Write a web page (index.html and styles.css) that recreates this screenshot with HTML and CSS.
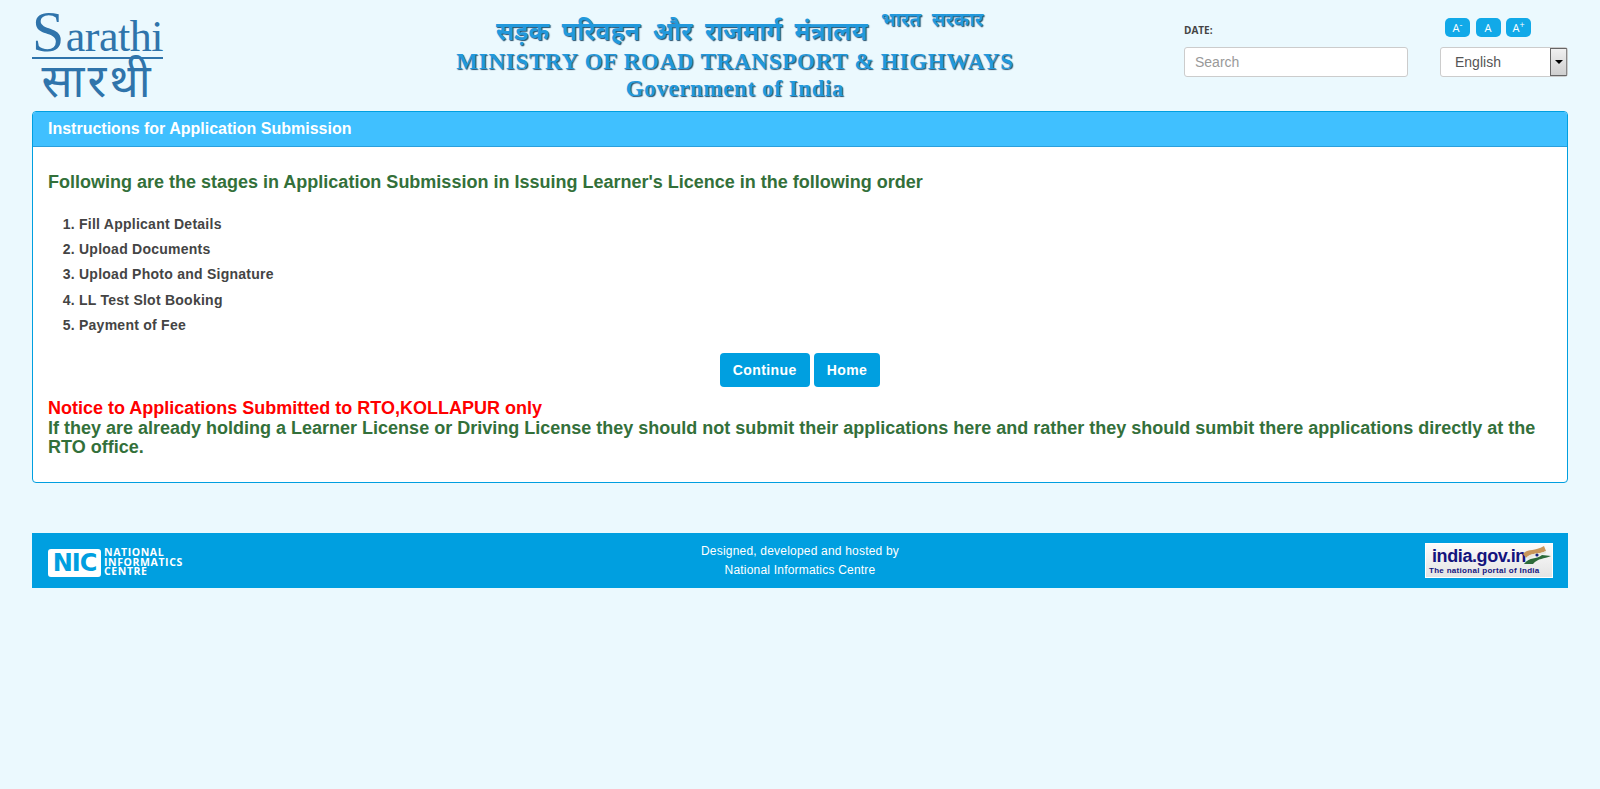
FILE: index.html
```html
<!DOCTYPE html>
<html lang="en">
<head>
  <meta charset="UTF-8" />
  <title>Sarathi - Instructions for Application Submission</title>
  <meta name="viewport" content="width=device-width, initial-scale=1.0" />
  <link rel="stylesheet" href="styles.css">
</head>
<body>

  <header class="topo">
    <div class="logo-sarathi">
      <div class="logo-en"><span class="logo-s">S</span>arathi</div>
      <div class="logo-hi" lang="hi">सारथी</div>
    </div>

    <div class="ministerio">
      <div class="min-hi" lang="hi">सड़क परिवहन और राजमार्ग मंत्रालय <sup>भारत सरकार</sup></div>
      <div class="min-en">MINISTRY OF ROAD TRANSPORT &amp; HIGHWAYS</div>
      <div class="min-gov">Government of India</div>
    </div>

    <div class="busca">
      <div class="data">DATE:</div>
      <input type="text" class="campo" placeholder="Search" />
    </div>

    <div class="opcoes">
      <div class="fontes">
        <a href="#" class="fonte">A<sup>-</sup></a>
        <a href="#" class="fonte">A</a>
        <a href="#" class="fonte">A<sup>+</sup></a>
      </div>
      <div class="idioma">
        <span>English</span>
        <span class="seta"><i></i></span>
      </div>
    </div>
  </header>

  <main class="painel">
    <div class="painel-titulo">Instructions for Application Submission</div>
    <div class="painel-corpo">
      <h3>Following are the stages in Application Submission in Issuing Learner's Licence in the following order</h3>

      <ol class="etapas">
        <li>Fill Applicant Details</li>
        <li>Upload Documents</li>
        <li>Upload Photo and Signature</li>
        <li>LL Test Slot Booking</li>
        <li>Payment of Fee</li>
      </ol>

      <div class="botoes">
        <button>Continue</button>
        <button>Home</button>
      </div>

      <div class="aviso">
        <span class="vermelho">Notice to Applications Submitted to RTO,KOLLAPUR only</span><br />
        If they are already holding a Learner License or Driving License they should not submit their applications here and rather they should sumbit there applications directly at the RTO office.
      </div>
    </div>
  </main>

  <footer class="rodape">
    <div class="nic">
      <span class="nic-caixa">NIC</span>
      <span class="nic-nome">NATIONAL<br />INFORMATICS<br />CENTRE</span>
    </div>
    <div class="creditos">
      Designed, developed and hosted by<br />
      National Informatics Centre
    </div>
    <div class="india-gov">
      <span class="india-url">india.gov.in</span>
      <svg class="india-flag" viewBox="0 0 30 20" width="30" height="20">
        <path d="M1 9 C6 3 12 7 22 1 L24 6 C16 10 9 7 4 13 Z" fill="#c9965a" />
        <path d="M4 13 C9 7 16 10 24 6 L24 8 C18 11 12 9 8 14 Z" fill="#e8e8e0" />
        <path d="M2 19 C8 11 14 15 20 10 L29 11 C22 14 16 13 11 19 Z" fill="#2d6b3a" />
        <circle cx="15" cy="10" r="1.6" fill="#1a237e" />
      </svg>
      <span class="india-sub">The national portal of India</span>
    </div>
  </footer>

</body>
</html>
```

FILE: styles.css
```css
body {
  margin: 0;
  padding: 0 32px;
  background-color: #ebf9fe;
  font-family: "Liberation Sans", Arial, sans-serif;
  color: #444;
}

/* topo */
.topo {
  display: flex;
  height: 111px;
}

.logo-sarathi {
  width: 131px;
  padding-top: 12px;
  color: #2f74ab;
  font-family: "Liberation Serif", serif;
  text-align: right;
}

.logo-en {
  height: 45px;
  font-size: 44px;
  line-height: 46px;
  letter-spacing: -0.5px;
  white-space: nowrap;
}

.logo-s {
  font-size: 58px;
  line-height: 40px;
  margin-right: 2px;
}

.logo-hi {
  font-size: 46px;
  line-height: 40px;
  letter-spacing: 3px;
  text-align: center;
  white-space: nowrap;
  border-top: 2px solid #2f74ab;
  font-family: "Noto Sans", "DejaVu Sans", sans-serif;
}

.ministerio {
  width: 600px;
  margin-left: 272px;
  text-align: center;
  font-family: "Liberation Serif", serif;
  font-weight: bold;
  color: #2299dc;
  text-shadow: 1px 1px 1px #24506f;
}

.min-hi {
  font-family: "Noto Sans", "DejaVu Sans", sans-serif;
  font-size: 25px;
  line-height: 36px;
  padding-top: 12px;
  padding-left: 9px;
  word-spacing: 6px;
  white-space: nowrap;
}

.min-hi sup {
  font-size: 18.7px;
  line-height: 0;
  margin-left: 1px;
  vertical-align: 14px;
}

.min-en {
  font-size: 23px;
  line-height: 28px;
  letter-spacing: 0.75px;
  white-space: nowrap;
}

.min-gov {
  font-size: 23px;
  line-height: 26px;
  letter-spacing: 0.6px;
}

.busca {
  width: 224px;
  margin-left: 149px;
  padding-top: 23px;
}

.data {
  font-family: "Open Sans", sans-serif;
  font-size: 10px;
  font-weight: bold;
  line-height: 14px;
  margin-bottom: 10px;
  color: #444;
}

.campo {
  display: block;
  width: 100%;
  height: 30px;
  box-sizing: border-box;
  padding: 0 10px;
  border: 1px solid #ccc;
  border-radius: 3px;
  font-family: inherit;
  font-size: 14px;
  color: #555;
  background: #fff;
}

.campo::placeholder {
  color: #999;
}

.opcoes {
  width: 128px;
  margin-left: 32px;
  padding-top: 18px;
}

.fontes {
  display: flex;
  gap: 5.5px;
  padding-left: 5px;
  margin-bottom: 10px;
}

.fonte {
  display: block;
  width: 25px;
  height: 19px;
  border-radius: 5px;
  background-color: #11a9e8;
  color: #fff;
  font-family: "Open Sans", sans-serif;
  font-size: 11px;
  line-height: 20px;
  text-align: center;
  text-decoration: none;
}

.fonte sup {
  font-size: 9px;
  line-height: 0;
  vertical-align: 4px;
}

.idioma {
  position: relative;
  height: 30px;
  box-sizing: border-box;
  padding-left: 14px;
  border: 1px solid #ccc;
  border-radius: 3px;
  background: #fff;
  font-size: 14px;
  line-height: 28px;
  color: #555;
}

.seta {
  position: absolute;
  top: 0;
  right: 0;
  width: 17px;
  height: 28px;
  box-sizing: border-box;
  border: 1px solid #666;
  border-right-color: #888;
  background: linear-gradient(#f0f0f0, #cfcfcf);
}

.seta i {
  position: absolute;
  left: 4px;
  top: 11px;
  border-top: 4px solid #000;
  border-left: 4px solid transparent;
  border-right: 4px solid transparent;
}

/* painel */
.painel {
  height: 372px;
  box-sizing: border-box;
  border: 1px solid #009fe0;
  border-radius: 4px;
  background-color: #fff;
  overflow: hidden;
}

.painel-titulo {
  height: 34px;
  padding-left: 15px;
  background-color: #40c0ff;
  border-bottom: 1px solid #2b9fdc;
  color: #fff;
  font-size: 16px;
  font-weight: bold;
  line-height: 34px;
}

.painel-corpo {
  padding: 0 15px;
}

.painel-corpo h3 {
  margin: 25px 0 0;
  font-size: 18px;
  line-height: 20px;
  color: #33703a;
}

.etapas {
  margin: 20px 0 0;
  padding-left: 31px;
  font-size: 14px;
  font-weight: bold;
  line-height: 25.2px;
  letter-spacing: 0.25px;
  color: #444;
}

.botoes {
  display: flex;
  justify-content: center;
  gap: 4px;
  margin-top: 15px;
}

.botoes button {
  height: 34px;
  padding: 0 13px;
  border: none;
  border-radius: 4px;
  background-color: #009fe0;
  color: #fff;
  font-family: inherit;
  font-size: 14px;
  font-weight: bold;
  letter-spacing: 0.4px;
  cursor: pointer;
}

.aviso {
  margin-top: 12px;
  font-size: 18px;
  font-weight: bold;
  line-height: 19.5px;
  color: #33703a;
}

.vermelho {
  color: #f00;
}

/* rodape */
.rodape {
  display: grid;
  grid-template-columns: 1fr auto 1fr;
  align-items: center;
  height: 55px;
  margin-top: 50px;
  padding: 0 15px;
  background-color: #009fe0;
  color: #fff;
}

.nic {
  display: flex;
  align-items: center;
  gap: 3px;
  padding: 4px 0 0 1px;
}

.nic-caixa {
  width: 53px;
  height: 28px;
  box-sizing: border-box;
  border: 2px solid #fff;
  border-radius: 3px;
  background-color: #fff;
  font-family: "DejaVu Sans", sans-serif;
  font-size: 24px;
  font-weight: bold;
  line-height: 24px;
  letter-spacing: -1px;
  text-align: center;
  color: #009fe0;
}

.nic-nome {
  font-family: "Open Sans", sans-serif;
  font-size: 10.5px;
  font-weight: bold;
  line-height: 9.5px;
  letter-spacing: 0.6px;
}

.creditos {
  font-size: 12px;
  line-height: 18.5px;
  letter-spacing: 0.2px;
  text-align: center;
}

.india-gov {
  position: relative;
  justify-self: end;
  width: 128px;
  height: 35px;
  box-sizing: border-box;
  border: 1px solid #fff;
  background: linear-gradient(#fbfbfb, #e4e4e4);
  color: #14147e;
}

.india-url {
  display: block;
  padding-left: 6px;
  font-size: 18px;
  font-weight: bold;
  line-height: 20px;
  letter-spacing: -0.4px;
  margin-top: 2px;
}

.india-sub {
  display: block;
  padding-left: 3px;
  font-size: 8px;
  font-weight: bold;
  line-height: 10px;
  letter-spacing: 0.3px;
}

.india-flag {
  position: absolute;
  top: 1px;
  right: 0;
}
```
